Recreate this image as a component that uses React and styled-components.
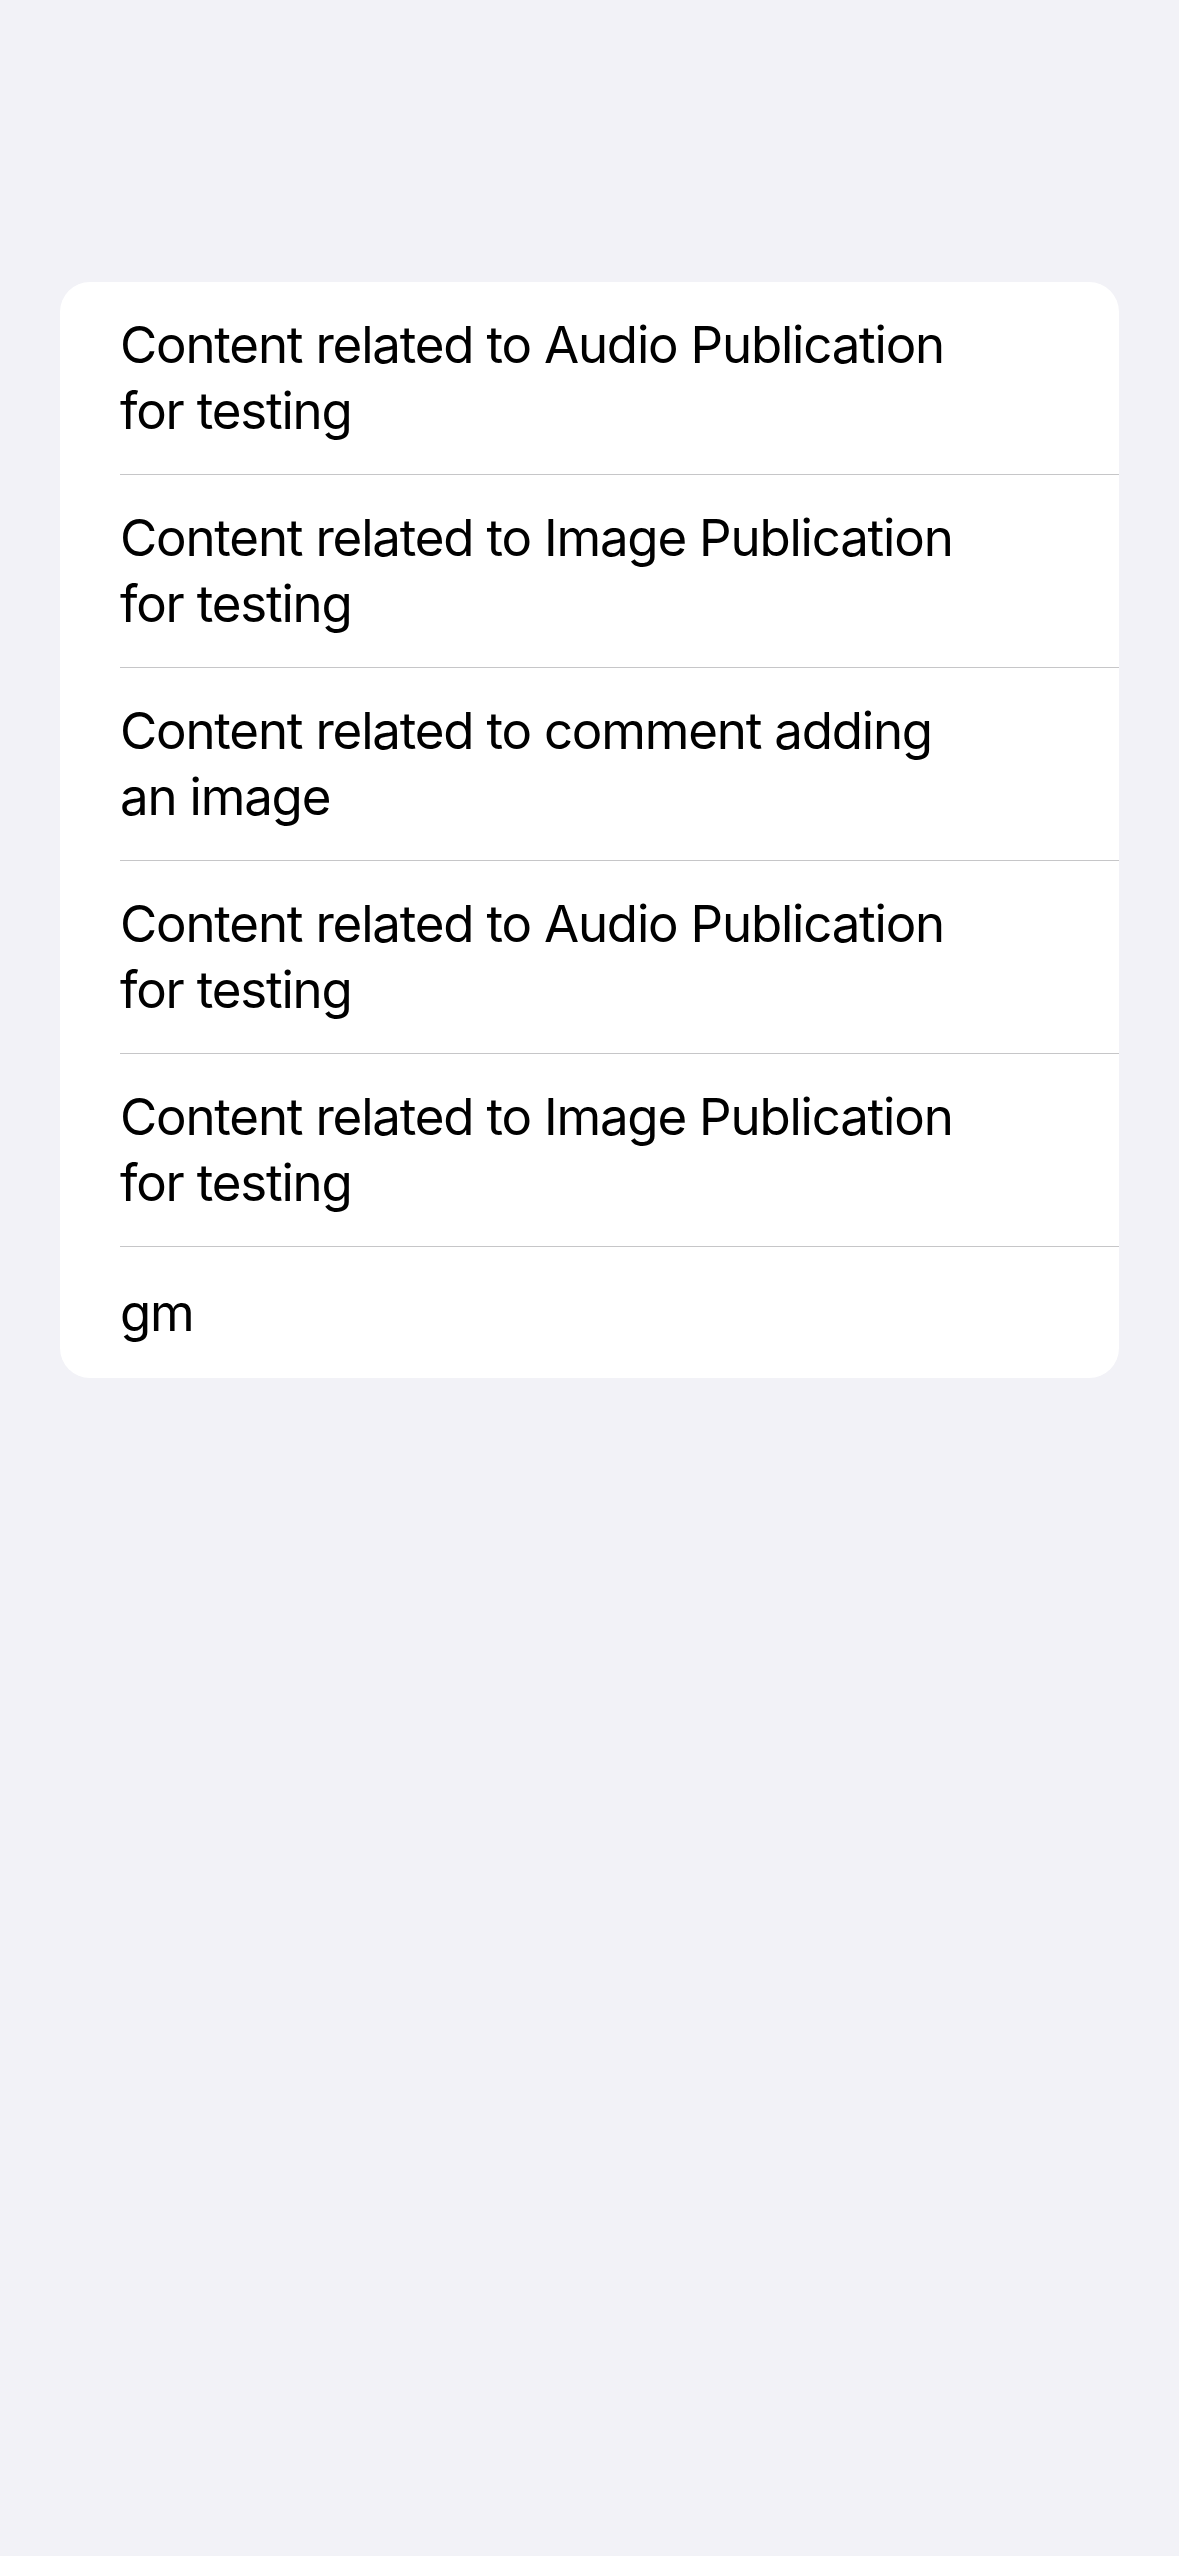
import styled, { createGlobalStyle } from 'styled-components';

const GlobalStyle = createGlobalStyle`
  html, body {
    margin: 0;
    padding: 0;
    background-color: #f2f2f7;
  }

  body {
    font-family: Inter, "Noto Sans", "Liberation Sans", sans-serif;
    -webkit-font-smoothing: antialiased;
  }
`;

const Screen = styled.div`
  min-height: 2556px;
  padding: 282px 60px 0 60px;
  box-sizing: border-box;
  background-color: #f2f2f7;
`;

const List = styled.ul`
  list-style: none;
  margin: 0;
  padding: 0;
  background-color: #fff;
  border-radius: 30px;
  overflow: hidden;
`;

const Row = styled.li`
  display: flex;
  align-items: center;
  min-height: 132px;
  padding: 30px 140px 30px 60px;
  box-sizing: border-box;
  position: relative;

  & + &::before {
    content: '';
    position: absolute;
    top: 0;
    left: 60px;
    right: 0;
    height: 1px;
    background-color: #c6c6c8;
  }

  & + & {
    padding-top: 31px;
  }
`;

const Label = styled.span`
  font-size: 51px;
  line-height: 66px;
  font-weight: 400;
  letter-spacing: -1.2px;
  color: #000;
  white-space: pre-line;
`;

const items = [
  'Content related to Audio Publication\nfor testing',
  'Content related to Image Publication\nfor testing',
  'Content related to comment adding\nan image',
  'Content related to Audio Publication\nfor testing',
  'Content related to Image Publication\nfor testing',
  'gm',
];

const App = () => {
  return (
    <>
      <GlobalStyle />
      <Screen>
        <List>
          {items.map((text, i) => (
            <Row key={i}>
              <Label>{text}</Label>
            </Row>
          ))}
        </List>
      </Screen>
    </>
  );
};

export default App;
